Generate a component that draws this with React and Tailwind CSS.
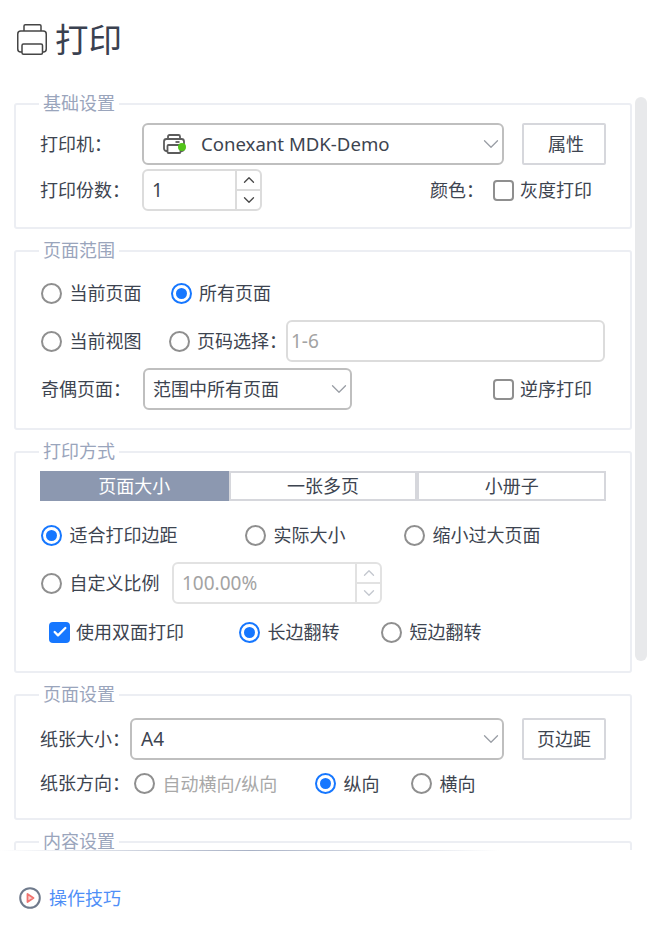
import React from 'react'
import { ChevronDown, ChevronUp, Check } from 'lucide-react'

// Page title printer
function PrinterIcon({ className }) {
  return (
    <svg viewBox="0 0 30 31" fill="none" stroke="#454545" strokeWidth="1.500" className={className}>
      <path d="M7 7V2a1.250 1.250 0 0 1 1.250-1.250h14.500A1.250 1.250 0 0 1 24 2v5" />
      <rect x="0.750" y="7" width="28.500" height="21" rx="3" />
      <rect x="5" y="20" width="20.500" height="10.250" rx="1.500" fill="#fff" />
    </svg>
  )
}

// Small printer in the printer select, with its status dot
function PrinterStatusIcon({ className }) {
  return (
    <span className={`relative block ${className}`}>
      <svg viewBox="0 0 22 20" fill="none" stroke="#5c5c5c" strokeWidth="1.800" className="h-[20px] w-[22px]">
        <path d="M5 5V2.500A1.500 1.500 0 0 1 6.500 1h9A1.500 1.500 0 0 1 17 2.500V5" />
        <rect x="1" y="5" width="20" height="12" rx="2.500" />
        <rect x="4.500" y="11" width="13" height="8" rx="1" fill="#fff" />
        <path d="M12.500 8h4" />
      </svg>
      <span className="absolute left-[15px] top-[9px] h-[8px] w-[8px] rounded-full bg-[#52c41a]" />
    </span>
  )
}

function Group({ title, children, className = '' }) {
  return (
    <section className={`relative rounded-[3px] border-2 border-[#eceef3] ${className}`}>
      <span className="absolute left-[23px] top-[-12px] bg-white px-[4px] text-[18px] leading-[20px] text-[#9aa5bc]">{title}</span>
      {children}
    </section>
  )
}

function Radio({ label, checked, disabled, className = '' }) {
  return (
    <label className={`flex shrink-0 items-center gap-[7.500px] whitespace-nowrap text-[18px] leading-[24px] ${disabled ? 'text-[#a8a8a8]' : 'text-[#3d4450]'} ${className}`}>
      {checked ? (
        <span className="flex h-[21px] w-[21px] items-center justify-center rounded-full border-2 border-[#1677ff]">
          <span className="h-[11px] w-[11px] rounded-full bg-[#1677ff]" />
        </span>
      ) : (
        <span className="h-[21px] w-[21px] rounded-full border-2 border-[#8f8f8f]" />
      )}
      {label}
    </label>
  )
}

function Checkbox({ label, checked, className = '' }) {
  return (
    <label className={`flex shrink-0 items-center gap-[6px] whitespace-nowrap text-[18px] leading-[24px] text-[#3d4450] ${className}`}>
      {checked ? (
        <span className="flex h-[21px] w-[21px] items-center justify-center rounded-[4px] bg-[#1677ff]">
          <Check size={16} strokeWidth={3.5} color="#fff" />
        </span>
      ) : (
        <span className="h-[21px] w-[21px] rounded-[4px] border-2 border-[#8f8f8f]" />
      )}
      {label}
    </label>
  )
}

function Select({ value, className = '', children }) {
  return (
    <div className={`flex h-[42px] items-center justify-between rounded-[6px] border-2 border-[#bfbfbf] text-[#3d4450] ${className}`}>
      <span className="flex items-center">{children}{value}</span>
      <ChevronDown size={26} strokeWidth={1.200} color="#9a9ea5" className="mr-[-2px]" />
    </div>
  )
}

function Spinner({ value, disabled, className = '' }) {
  const line = disabled ? 'border-[#e2e2e2]' : 'border-[#dcdcdc]'
  const arrow = disabled ? '#c4c8cf' : '#4a4a4a'
  return (
    <div className={`flex h-[42px] rounded-[6px] border-2 ${line} ${className}`}>
      <span className={`flex flex-1 items-center pl-[8px] text-[19px] ${disabled ? 'text-[#a3a3a3]' : 'text-[#3d4450]'}`}>{value}</span>
      <div className={`flex w-[25px] flex-col border-l-2 ${line}`}>
        <span className={`flex flex-1 items-center justify-center border-b-2 ${line}`}><ChevronUp size={18} strokeWidth={1.800} color={arrow} /></span>
        <span className="flex flex-1 items-center justify-center"><ChevronDown size={18} strokeWidth={1.800} color={arrow} /></span>
      </div>
    </div>
  )
}

function PlainButton({ children, className = '' }) {
  return (
    <button className={`h-[42px] w-[84px] rounded-[2px] border-2 border-[#d6d7dc] text-[18px] text-[#3d4450] ${className}`}>{children}</button>
  )
}

function Tab({ children, active }) {
  return (
    <div className={`flex h-[30px] flex-1 items-center justify-center border-2 text-[18px] ${active ? 'border-[#8c98b0] bg-[#8c98b0] text-white' : 'border-[#d6d7dc] text-[#3d4450]'}`}>
      {children}
    </div>
  )
}

export default function App() {
  return (
    <div className="relative h-[929px] w-[668px] overflow-hidden bg-white font-['Noto_Sans','Noto_Sans_CJK_SC',sans-serif]">
      {/* Scrollbar */}
      <div className="absolute left-[635px] top-[97px] h-[564px] w-[12px] rounded-[6px] bg-[#e8e9eb]" />

      <div className="h-[850px] overflow-hidden">
        <header className="flex h-[78px] items-center gap-[9px] pl-[17px]">
          <PrinterIcon className="h-[31px] w-[30px]" />
          <h1 className="ml-[-1px] text-[33.500px] leading-[40px] text-[#3a4150]">打印</h1>
        </header>

        <div className="ml-[14px] mt-[25px] flex w-[618px] flex-col gap-[21px]">
          <Group title="基础设置" className="h-[126px] px-[24px] pt-[18px]">
            <div className="flex items-center">
              <span className="w-[102px] text-[18px] text-[#3d4450]">打印机：</span>
              <Select value="Conexant MDK-Demo" className="mr-[18px] w-[362px] text-[18.600px]">
                <PrinterStatusIcon className="ml-[19px] mr-[15px] h-[20px] w-[23px]" />
              </Select>
              <PlainButton className="pl-[4px]">属性</PlainButton>
            </div>
            <div className="mt-[4px] flex items-center">
              <span className="w-[102px] text-[18px] text-[#3d4450]">打印份数：</span>
              <Spinner value="1" className="w-[120px]" />
              <span className="ml-[168px] w-[63px] text-[18px] text-[#3d4450]">颜色：</span>
              <Checkbox label="灰度打印" />
            </div>
          </Group>

          <Group title="页面范围" className="h-[180px] px-[25px] pt-[29px]">
            <div className="flex items-center gap-[29px]">
              <Radio label="当前页面" />
              <Radio label="所有页面" checked />
            </div>
            <div className="mt-[15px] flex items-center">
              <Radio label="当前视图" />
              <Radio label="页码选择：" className="ml-[27px]" />
              <div className="ml-[-1px] flex h-[42px] w-[319px] shrink-0 items-center rounded-[6px] border-2 border-[#dcdcdc] pl-[3px] text-[19px] text-[#a3a3a3]">1-6</div>
            </div>
            <div className="mt-[6px] flex items-center">
              <span className="w-[102px] text-[18px] text-[#3d4450]">奇偶页面：</span>
              <Select value="范围中所有页面" className="w-[209px] pl-[8px] text-[18px]" />
              <Checkbox label="逆序打印" className="ml-[141px]" />
            </div>
          </Group>

          <Group title="打印方式" className="h-[222px] px-[24px] pt-[18px]">
            <div className="flex w-[566px]">
              <Tab active>页面大小</Tab>
              <Tab>一张多页</Tab>
              <Tab>小册子</Tab>
            </div>
            <div className="mt-[22px] flex items-center pl-[1px]">
              <Radio label="适合打印边距" checked className="w-[204px]" />
              <Radio label="实际大小" className="w-[159px]" />
              <Radio label="缩小过大页面" />
            </div>
            <div className="mt-[15px] flex items-center pl-[1px]">
              <Radio label="自定义比例" className="w-[131px]" />
              <Spinner value="100.00%" disabled className="w-[210px]" />
            </div>
            <div className="mt-[16px] flex items-center pl-[9px]">
              <Checkbox label="使用双面打印" checked className="w-[190px]" />
              <Radio label="长边翻转" checked className="w-[142px]" />
              <Radio label="短边翻转" />
            </div>
          </Group>

          <Group title="页面设置" className="h-[126px] px-[24px] pt-[22px]">
            <div className="flex items-center">
              <span className="w-[90px] text-[18px] text-[#3d4450]">纸张大小：</span>
              <Select value="A4" className="mr-[18px] w-[374px] pl-[9px] text-[19px]" />
              <PlainButton>页边距</PlainButton>
            </div>
            <div className="mt-[10px] flex items-center">
              <span className="w-[94px] text-[18px] text-[#3d4450]">纸张方向：</span>
              <Radio label="自动横向/纵向" disabled className="w-[181px]" />
              <Radio label="纵向" checked className="w-[96px]" />
              <Radio label="横向" />
            </div>
          </Group>

          <Group title="内容设置" className="h-[60px]" />
        </div>
      </div>

      <footer>
        <div className="h-[1px] w-[500px] bg-gradient-to-r from-white via-[#a9b2c6] to-white" />
        <div className="mt-[35px] flex items-center gap-[8px] pl-[19px]">
          <svg viewBox="0 0 22 22" className="h-[22px] w-[22px]" fill="none">
            <circle cx="11" cy="11" r="9.800" stroke="#6f7a8c" strokeWidth="2" />
            <path d="M8.500 7l6 4-6 4z" fill="#fbd5d4" stroke="#f0736f" strokeWidth="1.800" strokeLinejoin="round" />
          </svg>
          <span className="text-[18px] leading-[24px] text-[#4f8ff7]">操作技巧</span>
        </div>
      </footer>
    </div>
  )
}
